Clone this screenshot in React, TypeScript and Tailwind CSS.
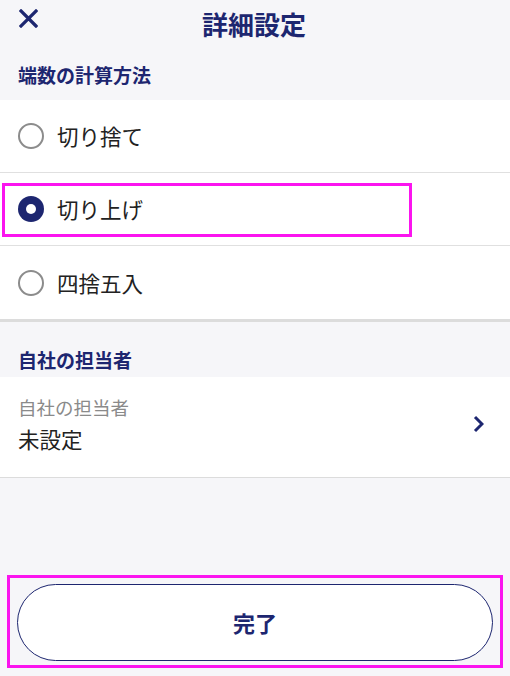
import React, { useState } from 'react';

const font = { fontFamily: '"Noto Sans CJK JP", "Noto Sans", sans-serif' };

const options = ['切り捨て', '切り上げ', '四捨五入'];

const Radio = ({ checked }: { checked: boolean }) =>
  checked ? (
    <span className="w-[26px] h-[26px] rounded-full bg-[#1d2670] flex items-center justify-center shrink-0">
      <span className="w-[10px] h-[10px] rounded-full bg-white" />
    </span>
  ) : (
    <span className="w-[26px] h-[26px] rounded-full border-2 border-[#8c8c8c] shrink-0" />
  );

export default function App() {
  const [selected, setSelected] = useState(1);

  return (
    <div className="w-[510px] h-[676px] bg-[#f6f6f9] flex flex-col text-[#222]" style={font}>
      {/* Header */}
      <div className="relative h-[47px] flex items-center justify-center">
        <svg className="absolute left-[19px] top-[9px]" width="19" height="19" viewBox="0 0 19 19">
          <path d="M2 2L17 17M17 2L2 17" stroke="#1d2670" strokeWidth="3.2" strokeLinecap="square" />
        </svg>
        <h1 className="text-[26px] font-bold text-[#1d2670] leading-none pr-[2px]">詳細設定</h1>
      </div>

      {/* Rounding */}
      <div className="px-[18px] pt-[14px] pb-[11px] text-[19px] font-bold text-[#1d2670] leading-[28px]">
        端数の計算方法
      </div>
      <div className="bg-white border-b-[3px] border-[#dcdcdc]">
        {options.map((label, i) => (
          <div
            key={label}
            onClick={() => setSelected(i)}
            className={`relative h-[73px] flex items-center gap-[13px] pl-[18px] cursor-pointer ${
              i < options.length - 1 ? 'border-b border-[#e0e0e0]' : ''
            }`}
          >
            <Radio checked={selected === i} />
            <span className="text-[21.5px] leading-none">{label}</span>
            {i === 1 && (
              <span className="absolute left-[2px] top-[10px] w-[410px] h-[54px] border-[3px] border-[#fb14ef] pointer-events-none" />
            )}
          </div>
        ))}
      </div>

      {/* Staff */}
      <div className="px-[18px] pt-[24px] pb-[3px] text-[19px] font-bold text-[#1d2670] leading-[28px]">
        自社の担当者
      </div>
      <div className="bg-white border-b border-[#dcdcdc] flex items-center justify-between pl-[18px] pr-[26px] pt-[18px] pb-[24px]">
        <div className="flex flex-col gap-[6px]">
          <span className="text-[18.5px] leading-[24px] text-[#8a8a8a]">自社の担当者</span>
          <span className="text-[21.5px] leading-[28px]">未設定</span>
        </div>
        <svg width="11" height="18" viewBox="0 0 11 18">
          <path d="M2 2L9 9L2 16" fill="none" stroke="#1d2670" strokeWidth="3" />
        </svg>
      </div>

      <div className="flex-1" />

      <div className="mx-[7px] mb-[8px] border-[3px] border-[#fb14ef] px-[7px] pt-[6px] pb-[4px]">
        <button className="w-full h-[77px] rounded-full bg-white border-[1.5px] border-[#1d2670] text-[22px] font-bold text-[#1d2670]">
          完了
        </button>
      </div>
    </div>
  );
}
